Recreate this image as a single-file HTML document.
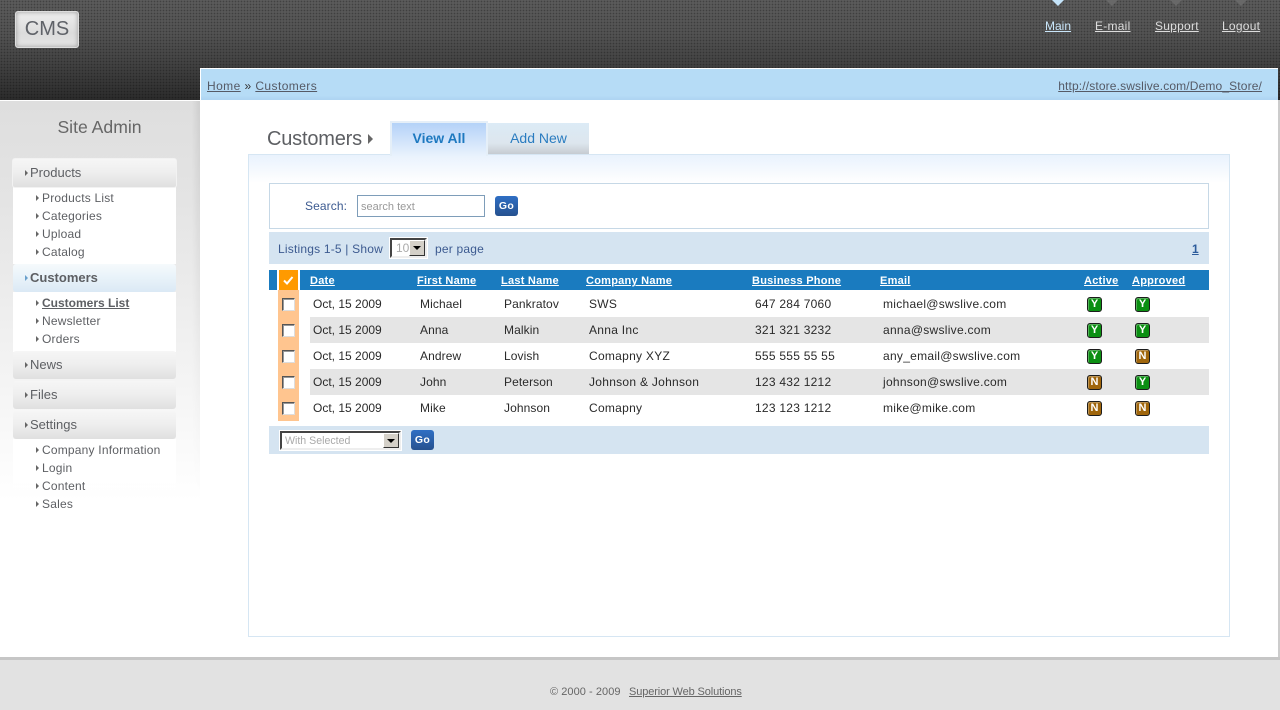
<!DOCTYPE html>
<html><head><meta charset="utf-8"><title>CMS - Customers</title>
<style>
html,body{margin:0;padding:0;width:1280px;height:710px;overflow:hidden;background:#fff;}
body{position:relative;font-family:"Liberation Sans",Arial,sans-serif;font-size:12px;color:#222;}
div,a,span.t{position:absolute;}
.t{white-space:nowrap;line-height:14px;}
a{color:inherit;}
.hd{top:0;left:0;width:1280px;height:100px;background:linear-gradient(#5b5b5b,#525252 35%,#3d3d3d 72%,#2b2b2b);}
.dots{top:0;left:0;width:1280px;height:100px;background-image:radial-gradient(rgba(0,0,0,.28) 0.7px,transparent 0.9px);background-size:3px 3px;}
.logo{left:15px;top:11px;width:62px;height:35px;border:1px solid #ddd;border-radius:3px;background:linear-gradient(#eeeeee,#dcdcdc 60%,#e4e4e4);box-shadow:inset 0 0 5px #999;color:#5f6268;font-size:20px;line-height:35px;text-align:center;}
.nav{top:19px;line-height:14px;color:#ddd;white-space:nowrap;letter-spacing:.25px;}
.tri{top:0;width:0;height:0;border-left:6px solid transparent;border-right:6px solid transparent;border-top:6px solid #686868;}
.crumb{left:200px;top:68px;width:1078px;height:32px;background:linear-gradient(#b6dcf6,#b6dcf6 85%,#aed4f2);border-left:1px solid #fff;border-top:1px solid #fff;box-sizing:border-box;color:#555a66;}
.side{left:0;top:101px;width:200px;height:400px;background:linear-gradient(#dedede,#e4e4e4 25%,#f4f4f4 70%,#fff);}
.shade{left:192px;top:101px;width:8px;height:400px;background:linear-gradient(90deg,transparent,rgba(0,0,0,.07));-webkit-mask-image:linear-gradient(#000,transparent);mask-image:linear-gradient(#000,transparent);}
.sb{left:13px;width:163px;height:28px;border-radius:3px;color:#5d5f63;background:linear-gradient(#f6f6f6,#eeeeee 50%,#e0e0e0);font-size:13px;}
.sb .t{left:17px;top:7px;}
.sb .ar{left:12px;top:11px;}
.ar{width:0;height:0;border-left:3px solid #666;border-top:3px solid transparent;border-bottom:3px solid transparent;}
.pn{left:13px;width:163px;background:#fff;}
.si{left:36px;color:#5d5f63;letter-spacing:.2px;}
.si .ar{left:0;top:4px;}
.si .t{left:6px;top:0;}
.box{left:248px;top:154px;width:980px;height:481px;border:1px solid #d6e6f3;background:linear-gradient(#e9f2fd,#fff 28px);}
.tab1{left:390px;top:121px;width:94px;height:33px;border:2px solid #e5eff8;border-bottom:none;background:linear-gradient(#b4d2f8,#e9f2fd);color:#1e79c0;font-weight:bold;font-size:14px;text-align:center;line-height:31px;z-index:2;}
.tab2{left:488px;top:123px;width:101px;height:31px;background:linear-gradient(#dcebf6,#dde6ee 65%,#c6cbd1);color:#2a7cc0;font-size:14px;text-align:center;line-height:31px;}
.bar{left:269px;width:940px;background:#d5e4f1;}
.c{color:#3c5a90;letter-spacing:.2px;}
.h{color:#fff;font-weight:bold;font-size:11px;top:275px;line-height:13px;letter-spacing:.25px;}
.r{color:#2a2a2a;}
.n1{letter-spacing:.1px}.co{letter-spacing:.28px}.ph{letter-spacing:.25px}.em{letter-spacing:.28px}
.cb{left:282px;width:13px;height:13px;box-sizing:border-box;background:#fff;border:1px solid;border-color:#555 #ddd #ddd #555;box-shadow:inset 1px 1px 0 #999;}
.bd{width:15px;height:15px;box-sizing:border-box;border-radius:3px;border:1px solid #1c1c1c;color:#fff;font-weight:bold;font-size:11px;line-height:13px;text-align:center;box-shadow:inset 1px 1px 0 rgba(255,255,255,.3);}
.y{background:#0b8f12;}.n{background:#a0660c;}
.sel{box-sizing:border-box;background:#fff;border:2px solid;border-color:#444 #eee #eee #444;outline:1px solid #fff;color:#aaa;}
.btn{right:0;top:0;width:16px;height:100%;background:#d4d0c8;border:1px solid;border-color:#fff #333 #333 #fff;box-sizing:border-box;}
.btn:after{content:"";position:absolute;left:3px;top:5px;border-left:4px solid transparent;border-right:4px solid transparent;border-top:4px solid #000;}
.go{width:23px;height:20px;border-radius:3px;background:linear-gradient(#2f6fc4,#26518f);color:#fff;font-weight:bold;font-size:10.5px;line-height:20px;text-align:center;letter-spacing:.3px;}
.ft{left:0;top:657px;width:1280px;height:53px;background:#e2e2e2;border-top:3px solid #c6c6c6;box-sizing:border-box;color:#666;font-size:11px;}
</style></head><body>
<div class="hd"></div><div class="dots"></div>
<div class="logo">CMS</div>
<div class="tri" style="left:1052px;border-top-color:#c4e4fa"></div>
<div class="tri" style="left:1106px"></div>
<div class="tri" style="left:1170px"></div>
<div class="tri" style="left:1235px"></div>
<a class="nav" href="#" style="left:1045px;color:#c9e6fa;letter-spacing:0">Main</a>
<a class="nav" href="#" style="left:1095px">E-mail</a>
<a class="nav" href="#" style="left:1155px">Support</a>
<a class="nav" href="#" style="left:1222px">Logout</a>

<div style="left:1278px;top:100px;width:2px;height:557px;background:#ccc"></div>
<div class="crumb">
 <span class="t" style="left:6px;top:10px;letter-spacing:.42px"><a href="#" style="position:static">Home</a> <span style="color:#333">»</span> <a href="#" style="position:static">Customers</a></span>
 <a class="t" href="#" style="right:16px;top:10px;letter-spacing:.14px">http://store.swslive.com/Demo_Store/</a>
</div>

<div class="side"></div><div class="shade"></div>
<span class="t" style="position:absolute;left:0;width:199px;text-align:center;top:118px;font-size:17.6px;line-height:18px;color:#666">Site Admin</span>

<div class="pn" style="top:186px;height:78px"></div>
<div class="sb" style="top:158px;border:1px solid #f2f2f2;left:12px"><div class="ar" style="left:12px;top:11px"></div><span class="t" style="position:absolute">Products</span></div>
<div class="si" style="top:191px"><div class="ar"></div><span class="t" style="position:absolute">Products List</span></div>
<div class="si" style="top:209px"><div class="ar"></div><span class="t" style="position:absolute">Categories</span></div>
<div class="si" style="top:227px"><div class="ar"></div><span class="t" style="position:absolute">Upload</span></div>
<div class="si" style="top:245px"><div class="ar"></div><span class="t" style="position:absolute">Catalog</span></div>

<div class="pn" style="top:292px;height:60px"></div>
<div class="sb" style="top:264px;background:linear-gradient(#f6fafc,#e8f2f9 50%,#dbe9f5);font-weight:bold"><div class="ar" style="border-left-color:#6aa0cc"></div><span class="t" style="position:absolute">Customers</span></div>
<div class="si" style="top:296px;font-weight:bold;letter-spacing:0"><div class="ar"></div><a class="t" href="#" style="position:absolute">Customers List</a></div>
<div class="si" style="top:314px"><div class="ar"></div><span class="t" style="position:absolute">Newsletter</span></div>
<div class="si" style="top:332px"><div class="ar"></div><span class="t" style="position:absolute">Orders</span></div>

<div class="sb" style="top:351px"><div class="ar"></div><span class="t" style="position:absolute">News</span></div>
<div class="sb" style="top:381px"><div class="ar"></div><span class="t" style="position:absolute">Files</span></div>
<div class="sb" style="top:411px"><div class="ar"></div><span class="t" style="position:absolute">Settings</span></div>
<div class="pn" style="top:439px;height:60px;background:linear-gradient(#fff,#fff 70%,transparent)"></div>
<div class="si" style="top:443px"><div class="ar"></div><span class="t" style="position:absolute">Company Information</span></div>
<div class="si" style="top:461px"><div class="ar"></div><span class="t" style="position:absolute">Login</span></div>
<div class="si" style="top:479px"><div class="ar"></div><span class="t" style="position:absolute">Content</span></div>
<div class="si" style="top:497px"><div class="ar"></div><span class="t" style="position:absolute">Sales</span></div>

<div class="box"></div>
<span class="t" style="position:absolute;left:267px;top:128px;font-size:20px;line-height:22px;color:#5d5f63;letter-spacing:-.2px">Customers</span>
<div style="left:368px;top:134px;width:0;height:0;border-left:5px solid #666;border-top:5px solid transparent;border-bottom:5px solid transparent"></div>
<div class="tab1">View All</div>
<div class="tab2">Add New</div>

<div style="left:269px;top:183px;width:938px;height:44px;border:1px solid #c6d8e6;background:#fff"></div>
<span class="t c" style="position:absolute;left:305px;top:199px;letter-spacing:.1px">Search:</span>
<div style="left:357px;top:195px;width:126px;height:20px;border:1px solid #7e9db9;background:#fff;color:#999;font-size:11px;line-height:22px;text-indent:3px">search text</div>
<div class="go" style="left:495px;top:196px">Go</div>

<div class="bar" style="top:232px;height:32px"></div>
<span class="t c" style="position:absolute;left:278px;top:242px">Listings 1-5 | Show</span>
<div class="sel" style="left:390px;top:238px;width:37px;height:20px;line-height:16px;padding-left:4px;font-size:12px">10<div class="btn"></div></div>
<span class="t c" style="position:absolute;left:435px;top:242px">per page</span>
<a class="t" href="#" style="left:1192px;top:242px;font-weight:bold;color:#2d5c9c">1</a>

<div style="left:269px;top:270px;width:8px;height:20px;background:#1a7bbf"></div>
<div style="left:279px;top:270px;width:19px;height:20px;background:#ff9a00"><svg width="19" height="20" style="display:block"><path d="M5 10.5 L8 13.5 L13.5 7" fill="none" stroke="#fff" stroke-width="2"/></svg></div>
<div style="left:300px;top:270px;width:909px;height:20px;background:#1a7bbf"></div>
<div style="left:278px;top:290px;width:21px;height:131px;background:#ffc58f"></div>
<div style="left:310px;top:317px;width:899px;height:26px;background:#e5e5e5"></div>
<div style="left:310px;top:369px;width:899px;height:26px;background:#e5e5e5"></div>

<a class="h" href="#" style="left:310px">Date</a>
<a class="h" href="#" style="left:417px">First Name</a>
<a class="h" href="#" style="left:501px">Last Name</a>
<a class="h" href="#" style="left:586px">Company Name</a>
<a class="h" href="#" style="left:752px">Business Phone</a>
<a class="h" href="#" style="left:880px">Email</a>
<a class="h" href="#" style="left:1084px">Active</a>
<a class="h" href="#" style="left:1132px">Approved</a>

<div class="cb" style="top:298px"></div>
<span class="t r" style="position:absolute;top:297px;left:313px">Oct, 15 2009</span>
<span class="t r n1" style="position:absolute;top:297px;left:420px">Michael</span>
<span class="t r n1" style="position:absolute;top:297px;left:504px">Pankratov</span>
<span class="t r co" style="position:absolute;top:297px;left:589px">SWS</span>
<span class="t r ph" style="position:absolute;top:297px;left:755px">647 284 7060</span>
<span class="t r em" style="position:absolute;top:297px;left:883px">michael@swslive.com</span>
<div class="bd y" style="left:1087px;top:297px">Y</div><div class="bd y" style="left:1135px;top:297px">Y</div>

<div class="cb" style="top:324px"></div>
<span class="t r" style="position:absolute;top:323px;left:313px">Oct, 15 2009</span>
<span class="t r n1" style="position:absolute;top:323px;left:420px">Anna</span>
<span class="t r n1" style="position:absolute;top:323px;left:504px">Malkin</span>
<span class="t r co" style="position:absolute;top:323px;left:589px">Anna Inc</span>
<span class="t r ph" style="position:absolute;top:323px;left:755px">321 321 3232</span>
<span class="t r em" style="position:absolute;top:323px;left:883px">anna@swslive.com</span>
<div class="bd y" style="left:1087px;top:323px">Y</div><div class="bd y" style="left:1135px;top:323px">Y</div>

<div class="cb" style="top:350px"></div>
<span class="t r" style="position:absolute;top:349px;left:313px">Oct, 15 2009</span>
<span class="t r n1" style="position:absolute;top:349px;left:420px">Andrew</span>
<span class="t r n1" style="position:absolute;top:349px;left:504px">Lovish</span>
<span class="t r co" style="position:absolute;top:349px;left:589px">Comapny XYZ</span>
<span class="t r ph" style="position:absolute;top:349px;left:755px">555 555 55 55</span>
<span class="t r em" style="position:absolute;top:349px;left:883px">any_email@swslive.com</span>
<div class="bd y" style="left:1087px;top:349px">Y</div><div class="bd n" style="left:1135px;top:349px">N</div>

<div class="cb" style="top:376px"></div>
<span class="t r" style="position:absolute;top:375px;left:313px">Oct, 15 2009</span>
<span class="t r n1" style="position:absolute;top:375px;left:420px">John</span>
<span class="t r n1" style="position:absolute;top:375px;left:504px">Peterson</span>
<span class="t r co" style="position:absolute;top:375px;left:589px">Johnson &amp; Johnson</span>
<span class="t r ph" style="position:absolute;top:375px;left:755px">123 432 1212</span>
<span class="t r em" style="position:absolute;top:375px;left:883px">johnson@swslive.com</span>
<div class="bd n" style="left:1087px;top:375px">N</div><div class="bd y" style="left:1135px;top:375px">Y</div>

<div class="cb" style="top:402px"></div>
<span class="t r" style="position:absolute;top:401px;left:313px">Oct, 15 2009</span>
<span class="t r n1" style="position:absolute;top:401px;left:420px">Mike</span>
<span class="t r n1" style="position:absolute;top:401px;left:504px">Johnson</span>
<span class="t r co" style="position:absolute;top:401px;left:589px">Comapny</span>
<span class="t r ph" style="position:absolute;top:401px;left:755px">123 123 1212</span>
<span class="t r em" style="position:absolute;top:401px;left:883px">mike@mike.com</span>
<div class="bd n" style="left:1087px;top:401px">N</div><div class="bd n" style="left:1135px;top:401px">N</div>

<div class="bar" style="top:426px;height:28px"></div>
<div class="sel" style="left:280px;top:431px;width:121px;height:19px;line-height:16px;padding-left:3px;font-size:10.6px">With Selected<div class="btn"></div></div>
<div class="go" style="left:411px;top:430px">Go</div>

<div class="ft"><span class="t" style="position:absolute;left:550px;top:25px;letter-spacing:.05px">© 2000 - 2009</span><a class="t" href="#" style="left:629px;top:25px;letter-spacing:-.12px">Superior Web Solutions</a></div>
</body></html>
